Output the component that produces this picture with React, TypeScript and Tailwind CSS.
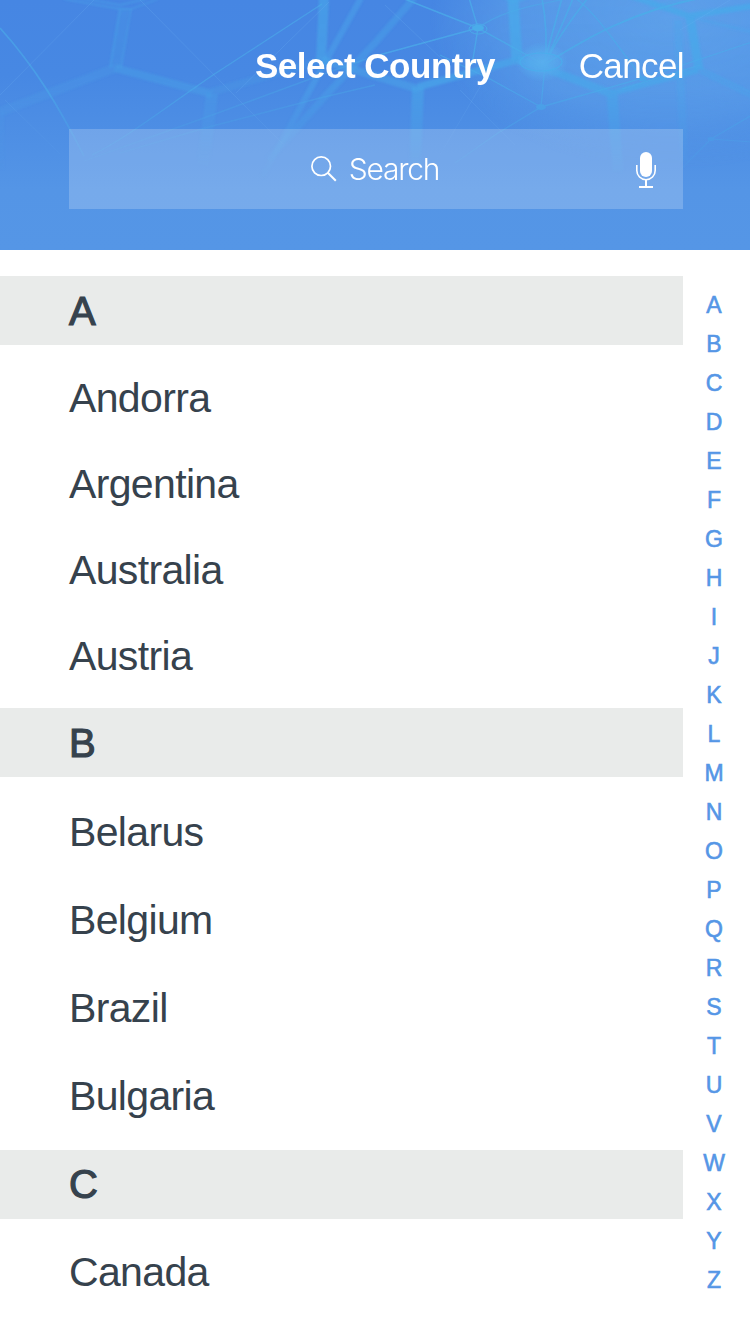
type Group = {
  letter: string;
  countries: string[];
  headingClass: string;
  rowClass: string;
  listClass: string;
};

const groups: Group[] = [
  {
    letter: "A",
    countries: ["Andorra", "Argentina", "Australia", "Austria"],
    headingClass: "leading-[71px]",
    rowClass: "h-[86px] leading-[86px]",
    listClass: "pt-[10px] pb-[9px]",
  },
  {
    letter: "B",
    countries: ["Belarus", "Belgium", "Brazil", "Bulgaria"],
    headingClass: "leading-[71px]",
    rowClass: "h-[88px] leading-[88px]",
    listClass: "pt-[11px] pb-[10px]",
  },
  {
    letter: "C",
    countries: ["Canada"],
    headingClass: "leading-[69px]",
    rowClass: "h-[86px] leading-[86px]",
    listClass: "pt-[10px]",
  },
];

const alphabet = "ABCDEFGHIJKLMNOPQRSTUVWXYZ".split("");

function Backdrop() {
  return (
    <svg
      className="absolute inset-0"
      width="750"
      height="250"
      viewBox="0 0 750 250"
      fill="none"
      aria-hidden="true"
    >
      <defs>
        <linearGradient id="sky" x1="0" y1="0" x2="0" y2="1">
          <stop offset="0" stopColor="#4686e3" />
          <stop offset="0.3" stopColor="#4788e3" />
          <stop offset="0.76" stopColor="#5495e6" />
          <stop offset="1" stopColor="#5596e6" />
        </linearGradient>
        <radialGradient id="haze">
          <stop offset="0" stopColor="#60a3ea" stopOpacity="0.9" />
          <stop offset="0.65" stopColor="#60a3ea" stopOpacity="0.6" />
          <stop offset="1" stopColor="#60a3ea" stopOpacity="0" />
        </radialGradient>
        <radialGradient id="core">
          <stop offset="0" stopColor="#5ab0ee" />
          <stop offset="0.5" stopColor="#58aeee" stopOpacity="0.7" />
          <stop offset="1" stopColor="#58aeee" stopOpacity="0" />
        </radialGradient>
        <linearGradient id="fade" x1="0" y1="0" x2="0" y2="1">
          <stop offset="0" stopColor="#fff" />
          <stop offset="0.36" stopColor="#fff" stopOpacity="0.92" />
          <stop offset="0.74" stopColor="#fff" stopOpacity="0" />
        </linearGradient>
        <mask id="fadeMask" maskUnits="userSpaceOnUse" x="0" y="0" width="750" height="250">
          <rect width="750" height="250" fill="url(#fade)" />
        </mask>
        <filter id="soft" x="-5%" y="-5%" width="110%" height="110%">
          <feGaussianBlur stdDeviation="0.8" />
        </filter>
      </defs>
      <rect width="750" height="250" fill="url(#sky)" />
      <g mask="url(#fadeMask)">
        <ellipse cx="670" cy="20" rx="240" ry="150" fill="url(#haze)" />

        <g stroke="#4aa8ea" filter="url(#soft)">
          <path d="M124 8L115 68" strokeWidth="11" opacity="0.18" />
          <path d="M120 10L110 67M131 9L121 68" strokeWidth="1.3" opacity="0.6" />
          <path d="M64 -1L120 9L131 9L158 -1M80 -2L120 5L146 -1" strokeWidth="1.3" opacity="0.55" />
          <path d="M115 68L212 94" strokeWidth="8" opacity="0.36" />
          <path d="M115 68L0 112" strokeWidth="9" opacity="0.2" />
          <path d="M0 112V170" strokeWidth="8" opacity="0.16" />
          <path d="M212 94L203 165" strokeWidth="12" opacity="0.3" />
          <path d="M212 92L322 60" strokeWidth="8" opacity="0.22" />
          <path d="M324 -2L321 60" strokeWidth="10" opacity="0.6" />
          <path d="M361 -2L318 75L262 178" strokeWidth="6" opacity="0.45" />
          <path d="M322 60L375 76L418 89" strokeWidth="8" opacity="0.5" />
          <path d="M414 -2L375 43L330 91L268 160" strokeWidth="7" opacity="0.42" />
          <path d="M418 87L517 60" strokeWidth="7" opacity="0.7" />
          <path d="M418 87L415 168" strokeWidth="12" opacity="0.6" />
          <path d="M513 -2L517 60" strokeWidth="11" opacity="0.85" />
          <path d="M505 -3L513 2L527 -3" strokeWidth="4" opacity="0.6" />
          <path d="M517 60L545 68L612 94" strokeWidth="8" opacity="0.75" />
          <path d="M612 94L618 172" strokeWidth="11" opacity="0.7" />
          <path d="M612 93L698 70" strokeWidth="6" opacity="0.75" />
          <path d="M690 17L699 70" strokeWidth="9" opacity="0.85" />
          <path d="M631 -4L689 16L752 6" strokeWidth="6" opacity="0.85" />
          <path d="M678 20L684 162" strokeWidth="8" opacity="0.35" />
          <path d="M690 17L752 32M650 6L685 0" strokeWidth="3" opacity="0.4" />
          <path d="M700 68L752 93M700 72L752 97" strokeWidth="1.4" opacity="0.8" />
        </g>

        <g stroke="#4bade9">
          <path d="M0 28C35 67 58 105 84 156" strokeWidth="1.8" opacity="0.6" />
          <path d="M322 4L213 75C165 108 125 139 92 155" strokeWidth="1.4" opacity="0.6" />
          <path d="M375 56L321 75L215 114L84 161" strokeWidth="1.4" opacity="0.4" />
          <path d="M375 85L320 98L205 128L120 153" strokeWidth="1.4" opacity="0.4" />
          <path d="M402 -2L478 28L472 65M469 -2L478 28L545 65M478 28L368 58" strokeWidth="1.4" opacity="0.75" />
          <path d="M478 28C503 10 535 5 570 -2" strokeWidth="1.4" opacity="0.5" />
          <path d="M542 -2C546 20 547 45 545 64M562 -2L545 60M573 -2C565 20 553 43 547 60M588 -2C573 17 555 43 547 60" strokeWidth="1.6" opacity="0.8" />
          <path d="M545 64C590 36 632 12 700 -2" strokeWidth="1.8" opacity="0.85" />
          <path d="M575 -2C597 13 620 50 643 79" strokeWidth="1.4" opacity="0.7" />
          <path d="M545 64L541 107L490 79L440 55M541 107L640 79L752 42M541 107L498 133L455 163" strokeWidth="1.3" opacity="0.65" />
          <path d="M622 89L700 65" strokeWidth="1" opacity="0.8" />
          <path d="M752 115L711 139L680 170M711 139L752 142" strokeWidth="1.2" opacity="0.7" />
        </g>

        <g stroke="#72b4f1" strokeWidth="0.8" opacity="0.3">
          <path d="M94 0L0 95M140 0L230 91L283 144M5 100L60 154M329 2L236 93M385 5L445 62M437 160L490 70M460 90L515 145M730 0L680 30" />
        </g>

        <ellipse cx="542" cy="62" rx="26" ry="20" fill="url(#core)" />
        <ellipse cx="541" cy="62" rx="21" ry="9" stroke="#4bb0ec" strokeWidth="1.2" opacity="0.8" />
        <ellipse cx="478" cy="28" rx="6" ry="3.2" fill="#4bade9" />
        <ellipse cx="478" cy="29" rx="9" ry="5" stroke="#4bade9" strokeWidth="0.9" />
        <ellipse cx="541" cy="107" rx="5" ry="3" fill="#4ba6e9" />
        <ellipse cx="643" cy="79" rx="4" ry="2.5" fill="#4ba6e9" />
        <ellipse cx="711" cy="139" rx="3.5" ry="2" fill="#4ba6e9" />
      </g>
    </svg>
  );
}

function SearchIcon() {
  return (
    <svg width="26" height="26" viewBox="0 0 26 26" fill="none" stroke="#fff" aria-hidden="true">
      <circle cx="10.2" cy="10.2" r="9.3" strokeWidth="1.7" />
      <path d="M16.8 16.8L24.8 24.8" strokeWidth="2" />
    </svg>
  );
}

function MicIcon() {
  return (
    <svg width="20" height="36" viewBox="0 0 20 36" fill="none" stroke="#fff" aria-hidden="true">
      <rect x="4" y="0" width="12" height="25" rx="6" fill="#fff" stroke="none" />
      <path d="M0.8 13V18.5A9.2 9.2 0 0 0 19.2 18.5V13" strokeWidth="1.6" />
      <path d="M10 28V35" strokeWidth="2" />
      <path d="M3 35H17" strokeWidth="2" />
    </svg>
  );
}

export default function App() {
  return (
    <div className="flex h-[1334px] w-[750px] flex-col overflow-hidden bg-white font-['Liberation_Sans',Arial,sans-serif]">
      <header className="relative h-[250px] shrink-0 overflow-hidden">
        <Backdrop />
        <div className="relative flex flex-col pr-[67px] pl-[69px]">
          <div className="grid h-[129px] grid-cols-[1fr_auto_1fr] pt-[45px] text-[35px] leading-[42px] whitespace-nowrap text-white">
            <span />
            <h1 className="pr-[2px] font-bold tracking-[-0.5px]">Select Country</h1>
            <button className="-mr-px h-[42px] justify-self-end text-right tracking-[-0.6px]">Cancel</button>
          </div>
          <div className="grid h-[80px] grid-cols-[1fr_auto_1fr] items-center bg-white/20 px-[27px]">
            <span />
            <div className="flex items-center gap-[12px] pr-[2px] text-white">
              <SearchIcon />
              <span className="font-['Inter','Liberation_Sans',sans-serif] text-[30px] leading-[40px] font-light tracking-[-1.2px]">
                Search
              </span>
            </div>
            <div className="justify-self-end pt-[2px]">
              <MicIcon />
            </div>
          </div>
        </div>
      </header>

      <div className="flex min-h-0 flex-1">
        <main className="w-[683px] shrink-0 pt-[26px] text-[41px] tracking-[-0.65px] text-[#36424d]">
          {groups.map((group) => (
            <section key={group.letter}>
              <h2
                className={`h-[69px] bg-[#e9ebea] pl-[69px] text-[40px] [-webkit-text-stroke:1.2px_#36424d] ${group.headingClass}`}
              >
                {group.letter}
              </h2>
              <ul className={group.listClass}>
                {group.countries.map((country) => (
                  <li key={country} className={`pl-[69px] ${group.rowClass}`}>
                    {country}
                  </li>
                ))}
              </ul>
            </section>
          ))}
        </main>
        <nav className="flex w-[62px] flex-col pt-[36px] text-center text-[23px] leading-[39px] text-[#5596e6] [-webkit-text-stroke:0.6px_#5596e6]">
          {alphabet.map((letter) => (
            <span key={letter} className="h-[39px] shrink-0">
              {letter}
            </span>
          ))}
        </nav>
      </div>
    </div>
  );
}
